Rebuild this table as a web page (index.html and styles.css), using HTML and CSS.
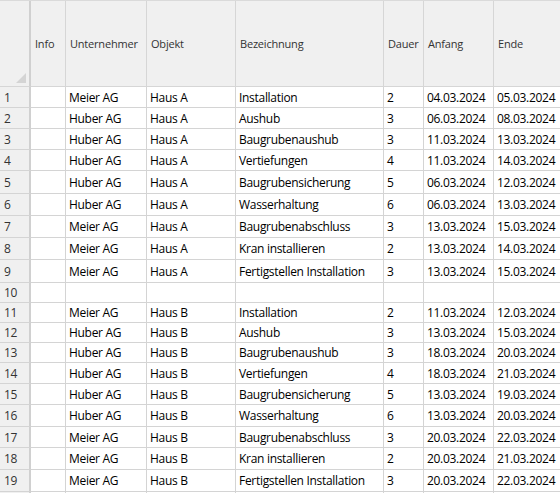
FILE: index.html
```html
<!DOCTYPE html>
<html>
<head>
<meta charset="utf-8">
<link rel="stylesheet" href="styles.css">
</head>
<body>
<div class="sheet">
  <div class="row head">
    <div class="cell rn corner"><span class="tri"></span></div>
    <div class="cell">Info</div>
    <div class="cell">Unternehmer</div>
    <div class="cell">Objekt</div>
    <div class="cell">Bezeichnung</div>
    <div class="cell">Dauer</div>
    <div class="cell">Anfang</div>
    <div class="cell">Ende</div>
  </div>
  <div class="row h21"><div class="cell rn">1</div><div class="cell"></div><div class="cell">Meier AG</div><div class="cell">Haus A</div><div class="cell">Installation</div><div class="cell">2</div><div class="cell">04.03.2024</div><div class="cell">05.03.2024</div></div>
  <div class="row h21"><div class="cell rn">2</div><div class="cell"></div><div class="cell">Huber AG</div><div class="cell">Haus A</div><div class="cell">Aushub</div><div class="cell">3</div><div class="cell">06.03.2024</div><div class="cell">08.03.2024</div></div>
  <div class="row h21"><div class="cell rn">3</div><div class="cell"></div><div class="cell">Huber AG</div><div class="cell">Haus A</div><div class="cell">Baugrubenaushub</div><div class="cell">3</div><div class="cell">11.03.2024</div><div class="cell">13.03.2024</div></div>
  <div class="row h21"><div class="cell rn">4</div><div class="cell"></div><div class="cell">Huber AG</div><div class="cell">Haus A</div><div class="cell">Vertiefungen</div><div class="cell">4</div><div class="cell">11.03.2024</div><div class="cell">14.03.2024</div></div>
  <div class="row h23"><div class="cell rn">5</div><div class="cell"></div><div class="cell">Huber AG</div><div class="cell">Haus A</div><div class="cell">Baugrubensicherung</div><div class="cell">5</div><div class="cell">06.03.2024</div><div class="cell">12.03.2024</div></div>
  <div class="row h22"><div class="cell rn">6</div><div class="cell"></div><div class="cell">Huber AG</div><div class="cell">Haus A</div><div class="cell">Wasserhaltung</div><div class="cell">6</div><div class="cell">06.03.2024</div><div class="cell">13.03.2024</div></div>
  <div class="row h22"><div class="cell rn">7</div><div class="cell"></div><div class="cell">Meier AG</div><div class="cell">Haus A</div><div class="cell">Baugrubenabschluss</div><div class="cell">3</div><div class="cell">13.03.2024</div><div class="cell">15.03.2024</div></div>
  <div class="row h22"><div class="cell rn">8</div><div class="cell"></div><div class="cell">Meier AG</div><div class="cell">Haus A</div><div class="cell">Kran installieren</div><div class="cell">2</div><div class="cell">13.03.2024</div><div class="cell">14.03.2024</div></div>
  <div class="row h23"><div class="cell rn">9</div><div class="cell"></div><div class="cell">Meier AG</div><div class="cell">Haus A</div><div class="cell">Fertigstellen Installation</div><div class="cell">3</div><div class="cell">13.03.2024</div><div class="cell">15.03.2024</div></div>
  <div class="row h20"><div class="cell rn">10</div><div class="cell"></div><div class="cell"></div><div class="cell"></div><div class="cell"></div><div class="cell"></div><div class="cell"></div><div class="cell"></div></div>
  <div class="row h20"><div class="cell rn">11</div><div class="cell"></div><div class="cell">Meier AG</div><div class="cell">Haus B</div><div class="cell">Installation</div><div class="cell">2</div><div class="cell">11.03.2024</div><div class="cell">12.03.2024</div></div>
  <div class="row h20"><div class="cell rn">12</div><div class="cell"></div><div class="cell">Huber AG</div><div class="cell">Haus B</div><div class="cell">Aushub</div><div class="cell">3</div><div class="cell">13.03.2024</div><div class="cell">15.03.2024</div></div>
  <div class="row h20"><div class="cell rn">13</div><div class="cell"></div><div class="cell">Huber AG</div><div class="cell">Haus B</div><div class="cell">Baugrubenaushub</div><div class="cell">3</div><div class="cell">18.03.2024</div><div class="cell">20.03.2024</div></div>
  <div class="row h21"><div class="cell rn">14</div><div class="cell"></div><div class="cell">Huber AG</div><div class="cell">Haus B</div><div class="cell">Vertiefungen</div><div class="cell">4</div><div class="cell">18.03.2024</div><div class="cell">21.03.2024</div></div>
  <div class="row h21"><div class="cell rn">15</div><div class="cell"></div><div class="cell">Huber AG</div><div class="cell">Haus B</div><div class="cell">Baugrubensicherung</div><div class="cell">5</div><div class="cell">13.03.2024</div><div class="cell">19.03.2024</div></div>
  <div class="row h22"><div class="cell rn">16</div><div class="cell"></div><div class="cell">Huber AG</div><div class="cell">Haus B</div><div class="cell">Wasserhaltung</div><div class="cell">6</div><div class="cell">13.03.2024</div><div class="cell">20.03.2024</div></div>
  <div class="row h21"><div class="cell rn">17</div><div class="cell"></div><div class="cell">Meier AG</div><div class="cell">Haus B</div><div class="cell">Baugrubenabschluss</div><div class="cell">3</div><div class="cell">20.03.2024</div><div class="cell">22.03.2024</div></div>
  <div class="row h22"><div class="cell rn">18</div><div class="cell"></div><div class="cell">Meier AG</div><div class="cell">Haus B</div><div class="cell">Kran installieren</div><div class="cell">2</div><div class="cell">20.03.2024</div><div class="cell">21.03.2024</div></div>
  <div class="row h22"><div class="cell rn">19</div><div class="cell"></div><div class="cell">Meier AG</div><div class="cell">Haus B</div><div class="cell">Fertigstellen Installation</div><div class="cell">3</div><div class="cell">20.03.2024</div><div class="cell">22.03.2024</div></div>
  <div class="row h22"><div class="cell rn"></div><div class="cell"></div><div class="cell"></div><div class="cell"></div><div class="cell"></div><div class="cell"></div><div class="cell"></div><div class="cell"></div></div>
</div>
</body>
</html>
```

FILE: styles.css
```css
html, body {
  margin: 0;
  padding: 0;
  background: #ffffff;
  overflow: hidden;
}
.sheet {
  width: 100%;
  height: 100vh;
  overflow: hidden;
  font-family: "Open Sans", "Noto Sans", sans-serif;
  font-size: 12px;
  letter-spacing: -0.3px;
  color: #000;
  border-top: 1px solid #dadada;
}
.row {
  display: grid;
  grid-template-columns: 31px 35px 81px 89px 148px 40px 70px 1fr;
}
.cell {
  box-sizing: border-box;
  border-right: 1px solid #d4d4d4;
  border-bottom: 1px solid #d4d4d4;
  padding: 0 3px;
  display: flex;
  align-items: center;
  white-space: nowrap;
  overflow: hidden;
}
.cell:last-child {
  border-right: none;
}
.cell.rn {
  background: #f0f0f0;
  border-right: 2px solid #d0d0d0;
  color: #333;
  padding-left: 4px;
}
.head {
  height: 86px;
  background: #f0f0f0;
  color: #333;
  font-size: 11px;
  letter-spacing: -0.2px;
}
.head .cell {
  border-color: #d6d6d6;
  padding-left: 4px;
}
.head .cell.rn {
  border-right: 2px solid #d0d0d0;
}
.corner {
  position: relative;
}
.tri {
  position: absolute;
  right: 3px;
  bottom: 3px;
  width: 0;
  height: 0;
  border-left: 10px solid transparent;
  border-bottom: 10px solid #d4d4d4;
}
.h19 { height: 19px; }
.h20 { height: 20px; }
.h21 { height: 21px; }
.h22 { height: 22px; }
.h23 { height: 23px; }
```
